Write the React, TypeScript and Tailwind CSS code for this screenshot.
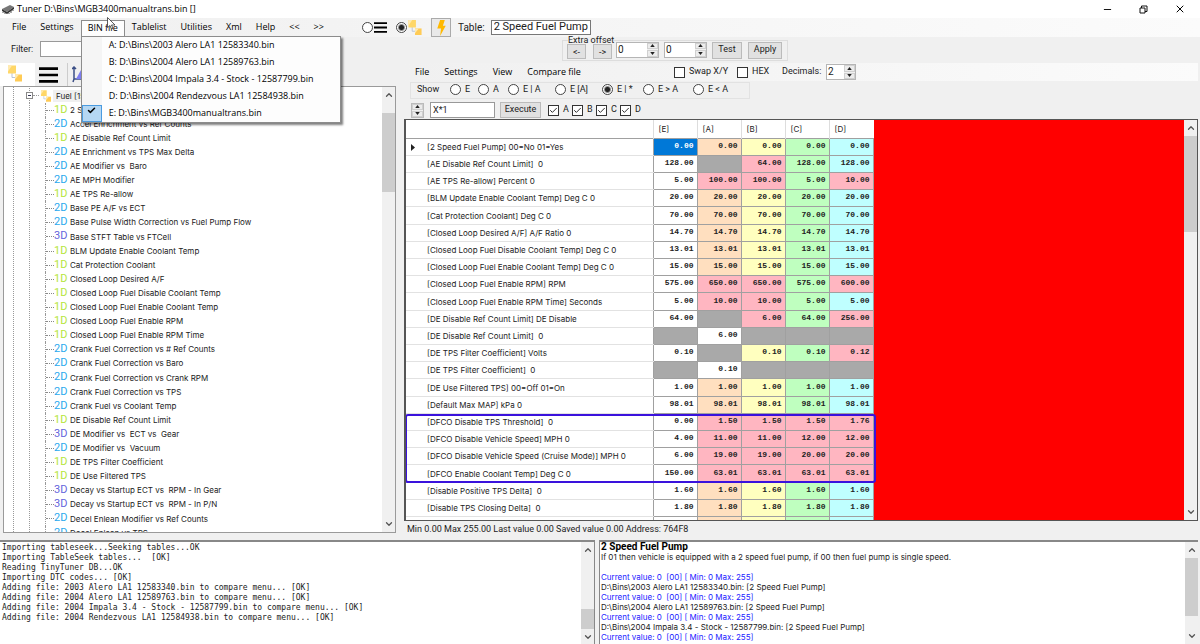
import { Check, ChevronDown, ChevronUp, Minus, X } from "lucide-react";

const uiFont = "font-['Open_Sans','Noto_Sans',sans-serif]";

const mainMenu = ["File", "Settings", "BIN file", "Tablelist", "Utilities", "Xml", "Help", "<<", ">>"];

const binFiles = [
  "A: D:\\Bins\\2003 Alero LA1 12583340.bin",
  "B: D:\\Bins\\2004 Alero LA1 12589763.bin",
  "C: D:\\Bins\\2004 Impala 3.4 - Stock - 12587799.bin",
  "D: D:\\Bins\\2004 Rendezvous LA1 12584938.bin",
  "E: D:\\Bins\\MGB3400manualtrans.bin",
];

const treeItems: [number, string][] = [
  [1, "2 Speed Fuel Pump"],
  [2, "Accel Enrichment vs Ref Counts"],
  [1, "AE Disable Ref Count Limit"],
  [2, "AE Enrichment vs TPS Max Delta"],
  [2, "AE Modifier vs  Baro"],
  [2, "AE MPH Modifier"],
  [1, "AE TPS Re-allow"],
  [2, "Base PE A/F vs ECT"],
  [2, "Base Pulse Width Correction vs Fuel Pump Flow"],
  [3, "Base STFT Table vs FTCell"],
  [1, "BLM Update Enable Coolant Temp"],
  [1, "Cat Protection Coolant"],
  [1, "Closed Loop Desired A/F"],
  [1, "Closed Loop Fuel Disable Coolant Temp"],
  [1, "Closed Loop Fuel Enable Coolant Temp"],
  [1, "Closed Loop Fuel Enable RPM"],
  [1, "Closed Loop Fuel Enable RPM Time"],
  [2, "Crank Fuel Correction vs # Ref Counts"],
  [2, "Crank Fuel Correction vs Baro"],
  [2, "Crank Fuel Correction vs Crank RPM"],
  [2, "Crank Fuel Correction vs TPS"],
  [2, "Crank Fuel vs Coolant Temp"],
  [1, "DE Disable Ref Count Limit"],
  [3, "DE Modifier vs  ECT vs  Gear"],
  [2, "DE Modifier vs  Vacuum"],
  [1, "DE TPS Filter Coefficient"],
  [1, "DE Use Filtered TPS"],
  [3, "Decay vs Startup ECT vs  RPM - In Gear"],
  [3, "Decay vs Startup ECT vs  RPM - In P/N"],
  [2, "Decel Enlean Modifier vs Ref Counts"],
  [2, "Decel Enlean vs TPS"],
];

const dimColor: Record<number, string> = {
  1: "text-[#b5e53c]",
  2: "text-[#2ba9ee]",
  3: "text-[#6464dc]",
};

// label, then values for E, A, B, C, D
const rows: string[][] = [
  ["[2 Speed Fuel Pump] 00=No 01=Yes", "0.00", "0.00", "0.00", "0.00", "0.00"],
  ["[AE Disable Ref Count Limit]  0", "128.00", "", "64.00", "128.00", "128.00"],
  ["[AE TPS Re-allow] Percent 0", "5.00", "100.00", "100.00", "5.00", "10.00"],
  ["[BLM Update Enable Coolant Temp] Deg C 0", "20.00", "20.00", "20.00", "20.00", "20.00"],
  ["[Cat Protection Coolant] Deg C 0", "70.00", "70.00", "70.00", "70.00", "70.00"],
  ["[Closed Loop Desired A/F] A/F Ratio 0", "14.70", "14.70", "14.70", "14.70", "14.70"],
  ["[Closed Loop Fuel Disable Coolant Temp] Deg C 0", "13.01", "13.01", "13.01", "13.01", "13.01"],
  ["[Closed Loop Fuel Enable Coolant Temp] Deg C 0", "15.00", "15.00", "15.00", "15.00", "15.00"],
  ["[Closed Loop Fuel Enable RPM] RPM", "575.00", "650.00", "650.00", "575.00", "600.00"],
  ["[Closed Loop Fuel Enable RPM Time] Seconds", "5.00", "10.00", "10.00", "5.00", "5.00"],
  ["[DE Disable Ref Count Limit] DE Disable", "64.00", "", "6.00", "64.00", "256.00"],
  ["[DE Disable Ref Count Limit]  0", "", "6.00", "", "", ""],
  ["[DE TPS Filter Coefficient] Volts", "0.10", "", "0.10", "0.10", "0.12"],
  ["[DE TPS Filter Coefficient]  0", "", "0.10", "", "", ""],
  ["[DE Use Filtered TPS] 00=Off 01=On", "1.00", "1.00", "1.00", "1.00", "1.00"],
  ["[Default Max MAP] kPa 0", "98.01", "98.01", "98.01", "98.01", "98.01"],
  ["[DFCO Disable TPS Threshold]  0", "0.00", "1.50", "1.50", "1.50", "1.76"],
  ["[DFCO Disable Vehicle Speed] MPH 0", "4.00", "11.00", "11.00", "12.00", "12.00"],
  ["[DFCO Disable Vehicle Speed (Cruise Mode)] MPH 0", "6.00", "19.00", "19.00", "20.00", "20.00"],
  ["[DFCO Enable Coolant Temp] Deg C 0", "150.00", "63.01", "63.01", "63.01", "63.01"],
  ["[Disable Positive TPS Delta]  0", "1.60", "1.60", "1.60", "1.60", "1.60"],
  ["[Disable TPS Closing Delta]  0", "1.80", "1.80", "1.80", "1.80", "1.80"],
];

const columnColors = ["bg-white", "bg-[#ffdfbf]", "bg-[#ffffbf]", "bg-[#bfffbf]", "bg-[#bfffff]"];

const cellColor = (values: string[], col: number) => {
  if (values[col] === "") return "bg-[#a9a9a9]";
  if (col === 0 || values[0] === "") return "bg-white";
  if (values[col] !== values[0]) return "bg-[#ffb6c1]";
  return columnColors[col];
};

const logLines = [
  "Importing tableseek...Seeking tables...OK",
  "Importing TableSeek tables...  [OK]",
  "Reading TinyTuner DB...OK",
  "Importing DTC codes... [OK]",
  "Adding file: 2003 Alero LA1 12583340.bin to compare menu... [OK]",
  "Adding file: 2004 Alero LA1 12589763.bin to compare menu... [OK]",
  "Adding file: 2004 Impala 3.4 - Stock - 12587799.bin to compare menu... [OK]",
  "Adding file: 2004 Rendezvous LA1 12584938.bin to compare menu... [OK]",
];

const compareFiles = [
  "D:\\Bins\\2003 Alero LA1 12583340.bin: [2 Speed Fuel Pump]",
  "D:\\Bins\\2004 Alero LA1 12589763.bin: [2 Speed Fuel Pump]",
  "D:\\Bins\\2004 Impala 3.4 - Stock - 12587799.bin: [2 Speed Fuel Pump]",
];

const TreeIcon = ({ className }: { className: string }) => (
  <svg viewBox="0 0 14 16" className={className}>
    <path d="M4 7v5h4" fill="none" stroke="#b9c4d6" />
    <rect x="0" y="0" width="8" height="8" fill="#ffd768" />
    <path d="M0 0h4l-4 6z" fill="#ffeab0" />
    <rect x="7" y="9" width="7" height="7" fill="#ffcb55" />
    <path d="M7 9h4l-4 5z" fill="#ffeab0" />
  </svg>
);

const LinesIcon = ({ className }: { className: string }) => (
  <svg viewBox="0 0 18 15" preserveAspectRatio="none" className={className}>
    <path d="M0 1.5h18M0 7.5h18M0 13.5h18" stroke="#000" strokeWidth="2.4" />
  </svg>
);

const Scrollbar = ({ thumb }: { thumb: string }) => (
  <div className="flex w-[13px] shrink-0 flex-col items-center bg-[#f0f0f0] text-[#555]">
    <ChevronUp size={10} strokeWidth={3} className="my-[3px] shrink-0" />
    <div className="flex w-full flex-1 flex-col">
      <div className={thumb} />
    </div>
    <ChevronDown size={10} strokeWidth={3} className="my-[3px] shrink-0" />
  </div>
);

const SpinButtons = () => (
  <div className="flex w-[11px] shrink-0 flex-col gap-px bg-[#f0f0f0]">
    <button aria-label="Up" className="flex flex-1 items-center justify-center border border-[#d0d0d0] bg-[#ececec]">
      <svg viewBox="0 0 6 4" className="h-[3px] w-[5px]">
        <path d="M3 0l3 4H0z" fill="#222" />
      </svg>
    </button>
    <button aria-label="Down" className="flex flex-1 items-center justify-center border border-[#d0d0d0] bg-[#ececec]">
      <svg viewBox="0 0 6 4" className="h-[3px] w-[5px]">
        <path d="M3 4l3-4H0z" fill="#222" />
      </svg>
    </button>
  </div>
);

const Spinner = ({ label, value, width }: { label: string; value: string; width: string }) => (
  <div className={`flex h-[16px] border border-[#b5b5b5] bg-white ${width}`}>
    <input aria-label={label} defaultValue={value} className="w-full min-w-0 flex-1 px-[1px] text-[10px] leading-[12px]" />
    <SpinButtons />
  </div>
);

const Radio = ({ name, text, checked, className }: { name: string; text: string; checked?: boolean; className?: string }) => (
  <label className={`flex items-center gap-[4px] whitespace-pre ${className ?? ""}`}>
    <input
      type="radio"
      name={name}
      defaultChecked={checked}
      className="size-[11px] shrink-0 appearance-none rounded-full border border-[#444] bg-white checked:bg-[radial-gradient(circle,#222_0_2px,white_4px)]"
    />
    {text}
  </label>
);

const Checkbox = ({ text, checked, className }: { text: string; checked?: boolean; className?: string }) => (
  <label className={`flex items-center gap-[4px] ${className ?? ""}`}>
    <span className="grid">
      <input
        type="checkbox"
        defaultChecked={checked}
        className="peer col-start-1 row-start-1 size-[11px] appearance-none border border-[#333] bg-white"
      />
      <Check
        size={9}
        strokeWidth={2.5}
        className="pointer-events-none invisible col-start-1 row-start-1 place-self-center peer-checked:visible"
      />
    </span>
    {text}
  </label>
);

const TitleBar = () => (
  <header className={`flex h-[18px] shrink-0 items-center bg-white text-[9px] text-black ${uiFont}`}>
    <svg viewBox="0 0 14 10" className="mr-[2px] ml-[1px] h-[10px] w-[14px]">
      <path d="M1 5l8-4 4 2-7 5z" fill="#777" />
      <path d="M1 5l5 3v2L1 7zM6 8l7-5v2l-7 5z" fill="#333" />
      <path d="M2 8v1M4 9v1M8 9v1M10 7v2M12 6v1" stroke="#555" />
    </svg>
    <h1>Tuner D:\Bins\MGB3400manualtrans.bin []</h1>
    <div className="ml-auto flex items-center gap-[26px] pr-[14px]">
      <button aria-label="Minimize">
        <Minus size={11} strokeWidth={2} />
      </button>
      <button aria-label="Restore">
        <svg viewBox="0 0 9 9" className="size-[9px]">
          <path d="M1 3h5v5H1zM2.500 3V1H8v5.500H6" fill="none" stroke="#111" />
        </svg>
      </button>
      <button aria-label="Close">
        <X size={12} strokeWidth={2} />
      </button>
    </div>
  </header>
);

const BinMenu = () => (
  <ul className="absolute top-[15px] -left-px z-20 w-[260px] border border-[#8c8c8c] bg-[#fdfdfd] shadow-[2px_2px_2px_rgba(0,0,0,0.5)]">
    {binFiles.map((file, i) => (
      <li key={file} className="flex h-[17px] items-center">
        <span className="flex h-full w-[20px] items-center bg-[#f5f5f5]">
          {i === binFiles.length - 1 && (
            <span className="flex size-full items-start justify-center border border-[#4a9be0] bg-[#b5d7f3]">
              <Check size={9} strokeWidth={4} />
            </span>
          )}
        </span>
        <button className="pl-[7px] whitespace-nowrap">{file}</button>
      </li>
    ))}
  </ul>
);

const MenuBar = () => (
  <div className="flex h-[19px] shrink-0 items-center bg-linear-to-r from-[#f0f0f0] to-[#fbfbfb]">
    <nav className={`flex w-[362px] pl-[5px] text-[9px] text-black ${uiFont}`}>
      {mainMenu.map((item) =>
        item === "BIN file" ? (
          <div key={item} className="relative border border-b-0 border-[#8c8c8c] bg-[#fdfdfd]">
            <button className="h-[15px] px-[6px]">{item}</button>
            <BinMenu />
            <svg viewBox="0 0 9 13" className="absolute -top-[4px] left-[25px] z-30 h-[13px] w-[9px]">
              <path d="M.5.5v10l2.500-2 1.500 3.500 1.500-.7L4.500 8H8z" fill="#fff" stroke="#333" strokeWidth=".8" />
            </svg>
          </div>
        ) : (
          <button key={item} className="h-[15px] px-[7px]">
            {item}
          </button>
        ),
      )}
    </nav>
    <label className="flex items-center">
      <input type="radio" name="view" aria-label="List view" className="size-[11px] appearance-none rounded-full border border-[#444] bg-white" />
      <LinesIcon className="ml-px h-[11px] w-[13px]" />
    </label>
    <label className="ml-[9px] flex items-center">
      <input
        type="radio"
        name="view"
        aria-label="Tree view"
        defaultChecked
        className="size-[11px] appearance-none rounded-full border border-[#444] bg-white checked:bg-[radial-gradient(circle,#222_0_2px,white_4px)]"
      />
      <TreeIcon className="ml-[1px] h-[15px] w-[14px]" />
    </label>
    <button aria-label="Go" className="ml-[9px] flex h-[19px] w-[20px] items-center justify-center border border-[#aaa] bg-[#e9e9e9]">
      <svg viewBox="0 0 9 17" className="h-[16px] w-[9px]">
        <path d="M3 0h5L6 6h3L3 17l1-8H0z" fill="#ffb900" />
      </svg>
    </button>
    <label htmlFor="table" className="ml-[7px] text-[10px]">
      Table:
    </label>
    <input id="table" defaultValue="2 Speed Fuel Pump" className="ml-[6px] h-[15px] w-[100px] border border-[#777] bg-white px-[2px] text-[11px]" />
  </div>
);

const TreePanel = () => (
  <section className="flex w-1/3 flex-col pr-[2px]">
    <div className="flex h-[26px] items-center gap-[7px] pl-[11px] text-[9px]">
      <label htmlFor="filter">Filter:</label>
      <input id="filter" className="mb-[3px] h-[16px] w-[120px] border border-[#999] bg-white px-[2px]" />
    </div>
    <div className="flex h-[23px]">
      <button aria-label="Tree" className="flex w-[35px] bg-white pt-px pl-[8px]">
        <TreeIcon className="h-[19px] w-[14px]" />
      </button>
      <button aria-label="List" className="flex w-[33px] items-center border-r border-[#ccc] pl-[4px]">
        <LinesIcon className="h-[16px] w-[19px]" />
      </button>
      <button aria-label="3D" className="flex w-[30px] items-center pl-[4px]">
        <svg viewBox="0 0 18 18" className="size-[18px]">
          <path d="M2 1v12l-1 3M2 13h14M0 3l2-2 2 2" fill="none" stroke="#3b4f86" strokeWidth="1.500" />
          <path d="M4 13l5-9 7 9z" fill="#7d7df0" />
        </svg>
      </button>
    </div>
    <div className="mr-[2px] mb-[7px] ml-[3px] flex min-h-0 flex-1 border border-[#9a9a9a] bg-white">
      <div className="min-w-0 flex-1 overflow-hidden pl-[9px] font-['Inter',sans-serif] text-[8px]">
        <div className="flex border-l border-dotted border-[#999] pt-px">
          <div className="w-[15px] shrink-0" />
          <div className="flex-1">
            <div className="flex h-[15px] items-center border-l border-dotted border-[#999]">
              <button aria-label="Collapse" className="-ml-[4px] flex size-[7px] items-center justify-center border border-[#888] bg-white">
                <span className="h-px w-[3px] bg-[#335]" />
              </button>
              <span className="w-[6px] border-t border-dotted border-[#999]" />
              <TreeIcon className="mx-[2px] h-[12px] w-[10px]" />
              <span className="bg-[#f0f0f0] px-[3px]">Fuel [155]</span>
            </div>
            <ul className="border-l border-dotted border-[#999] pl-[15px]">
              {treeItems.map(([dim, name]) => (
                <li
                  key={name}
                  className="flex h-[14px] items-center border-l border-dotted border-[#999] whitespace-pre nth-[10n]:h-[15px]"
                >
                  <span className="w-[8px] border-t border-dotted border-[#888]" />
                  <span className={`w-[16px] font-['Roboto'] text-[11px] ${dimColor[dim]}`}>{dim}D</span>
                  <button>{name}</button>
                </li>
              ))}
            </ul>
          </div>
        </div>
      </div>
      <Scrollbar thumb="mt-[10px] h-[79px] bg-[#cdcdcd]" />
    </div>
  </section>
);

const CompareGrid = () => (
  <div className="relative flex min-h-0 flex-1 overflow-hidden border-t border-r border-b border-l-2 border-[#555] bg-[#ff0000]">
    <table className="w-[467px] shrink-0 table-fixed border-collapse self-start bg-white font-['Inter',sans-serif] text-[8px]">
      <colgroup>
        <col className="w-[247px]" />
        <col span={5} className="w-[44px]" />
      </colgroup>
      <thead>
        <tr className="h-[18px] border-b border-[#a0a0a0] text-left">
          <th aria-label="Parameter" />
          {["[E]", "[A]", "[B]", "[C]", "[D]"].map((name) => (
            <th key={name} className="border-l border-[#ddd] pl-[5px] font-normal">
              {name}
            </th>
          ))}
        </tr>
      </thead>
      <tbody>
        {rows.map(([label, ...values], i) => (
          <tr key={i} className="h-[17px] nth-[5n]:h-[18px]">
            <th className="border-b border-[#e2e2e2] p-0 text-left font-normal whitespace-pre">
              <span className="flex items-center pt-[2px] leading-[13px]">
                <span className="w-[21px] shrink-0 pl-[5px]">
                  {i === 0 && (
                    <svg viewBox="0 0 4 7" className="h-[7px] w-[4px]">
                      <path d="M0 0l4 3.500L0 7z" fill="#222" />
                    </svg>
                  )}
                </span>
                {label}
              </span>
            </th>
            {values.map((value, col) => (
              <td
                key={col}
                className={`border border-[#a0a0a0] p-0 pr-[3px] pb-[2px] text-right font-['Liberation_Mono',monospace] text-[8px] leading-[13px] font-bold ${
                  i === 0 && col === 0 ? "bg-[#0078d7] text-white" : cellColor(values, col)
                }`}
              >
                {value}
              </td>
            ))}
          </tr>
        ))}
        <tr className="h-[17px]">
          <th aria-label="Parameter" />
          {columnColors.map((color) => (
            <td key={color} className={`border border-[#a0a0a0] ${color}`} />
          ))}
        </tr>
      </tbody>
    </table>
    <div className="ml-auto flex">
      <Scrollbar thumb="h-[96px] bg-[#cdcdcd]" />
    </div>
    {/* marker round the DFCO rows */}
    <div className="absolute top-[294px] -left-px h-[69px] w-[471px] rounded-[3px] border-2 border-[#3a12dc]" />
  </div>
);

const TablePanel = () => (
  <section className="flex min-w-0 flex-1 flex-col pr-[2px] pl-[4px]">
    <div className="flex h-[26px] items-start text-[9px]">
      <fieldset className="ml-[158px] flex h-[24px] items-center border border-[#ddd] pr-[5px] pl-[4px]">
        <legend className="ml-[1px] h-[6px] leading-[6px]">Extra offset</legend>
        <button className="h-[15px] w-[19px] border border-[#bbb] bg-[#e1e1e1] leading-[10px]">&lt;-</button>
        <button className="ml-[7px] h-[15px] w-[19px] border border-[#bbb] bg-[#e1e1e1] leading-[10px]">-&gt;</button>
        <div className="ml-[4px] flex gap-[5px] pb-[4px]">
          <Spinner label="Extra offset X" value="0" width="w-[43px]" />
          <Spinner label="Extra offset Y" value="0" width="w-[43px]" />
        </div>
        <div className="ml-[5px] flex gap-[6px] pb-[3px]">
          <button className="h-[17px] w-[30px] border border-[#bbb] bg-[#e1e1e1]">Test</button>
          <button className="h-[17px] w-[34px] border border-[#bbb] bg-[#e1e1e1]">Apply</button>
        </div>
      </fieldset>
    </div>
    <div className="flex h-[18px] items-center bg-linear-to-r from-[#f0f0f0] to-[#fbfbfb] text-[9px]">
      <nav className={`flex w-[270px] gap-[15px] pl-[11px] text-black ${uiFont}`}>
        <button>File</button>
        <button>Settings</button>
        <button>View</button>
        <button>Compare file</button>
      </nav>
      <Checkbox text="Swap X/Y" className="w-[63px]" />
      <Checkbox text="HEX" className="w-[45px]" />
      <span className="w-[44px]">Decimals:</span>
      <Spinner label="Decimals" value="2" width="w-[30px]" />
    </div>
    <fieldset className="mt-px ml-[6px] flex h-[17px] w-[340px] items-center border border-[#e2e2e2] pl-[6px] text-[9px]">
      <span className="w-[33px]">Show</span>
      <Radio name="show" text="E" className="w-[28px]" />
      <Radio name="show" text="A" className="w-[30px]" />
      <Radio name="show" text="E | A" className="w-[47px]" />
      <Radio name="show" text="E [A]" className="w-[47px]" />
      <Radio name="show" text="E | *" checked className="w-[41px]" />
      <Radio name="show" text="E > A" className="w-[50px]" />
      <Radio name="show" text="E < A" />
    </fieldset>
    <div className="flex h-[20px] items-center pt-[2px] pl-[7px] text-[9px]">
      <div className="flex h-[15px] border border-[#bbb]">
        <SpinButtons />
      </div>
      <input aria-label="Formula" defaultValue="X*1" className="ml-[6px] h-[16px] w-[65px] border border-[#999] bg-white px-[2px]" />
      <button className="ml-[5px] h-[16px] w-[41px] border border-[#bbb] bg-[#e1e1e1]">Execute</button>
      <div className="ml-[7px] flex gap-[2px]">
        {["A", "B", "C", "D"].map((name) => (
          <Checkbox key={name} text={name} checked className="w-[22px]" />
        ))}
      </div>
    </div>
    <CompareGrid />
    <p className="flex h-[19px] shrink-0 items-center pb-[2px] pl-[3px] text-[9px]">
      Min 0.00 Max 255.00 Last value 0.00 Saved value 0.00 Address: 764F8
    </p>
  </section>
);

const BottomPanels = () => (
  <div className="flex h-[104px] shrink-0 pr-[2px]">
    <section className="flex w-1/2 pr-[4px]">
      <div className="flex flex-1 border-t-2 border-r border-[#888] bg-white">
        <pre className="flex-1 pt-px pl-[2px] font-['DejaVu_Sans_Mono',monospace] text-[8px] leading-[10px] text-[#222]">
          {logLines.join("\n")}
        </pre>
        <Scrollbar thumb="mt-[51px] h-[20px] bg-[#cdcdcd]" />
      </div>
    </section>
    <section className="flex min-w-0 flex-1 overflow-hidden border-t-2 border-l border-[#888] bg-white">
      <div className="flex-1 pl-px font-['Inter',sans-serif] text-[8px] leading-[10px] whitespace-pre">
        <h2 className="font-['Roboto'] text-[10px] font-bold text-black">2 Speed Fuel Pump</h2>
        <p>If 01 then vehicle is equipped with a 2 speed fuel pump, if 00 then fuel pump is single speed.</p>
        <br />
        {compareFiles.map((file) => (
          <div key={file}>
            <p className="text-[#1a1aff]">Current value: 0  [00] [ Min: 0 Max: 255]</p>
            <p>{file}</p>
          </div>
        ))}
        <p className="text-[#1a1aff]">Current value: 0  [00] [ Min: 0 Max: 255]</p>
      </div>
      <Scrollbar thumb="h-[58px] bg-[#cdcdcd]" />
    </section>
  </div>
);

const App = () => {
  return (
    <div className="flex h-screen flex-col overflow-hidden bg-[#f0f0f0] font-['Roboto','Liberation_Sans',sans-serif] text-[#222]">
      <TitleBar />
      <MenuBar />
      <main className="flex min-h-0 flex-1">
        <TreePanel />
        <TablePanel />
      </main>
      <BottomPanels />
    </div>
  );
};

export default App;
